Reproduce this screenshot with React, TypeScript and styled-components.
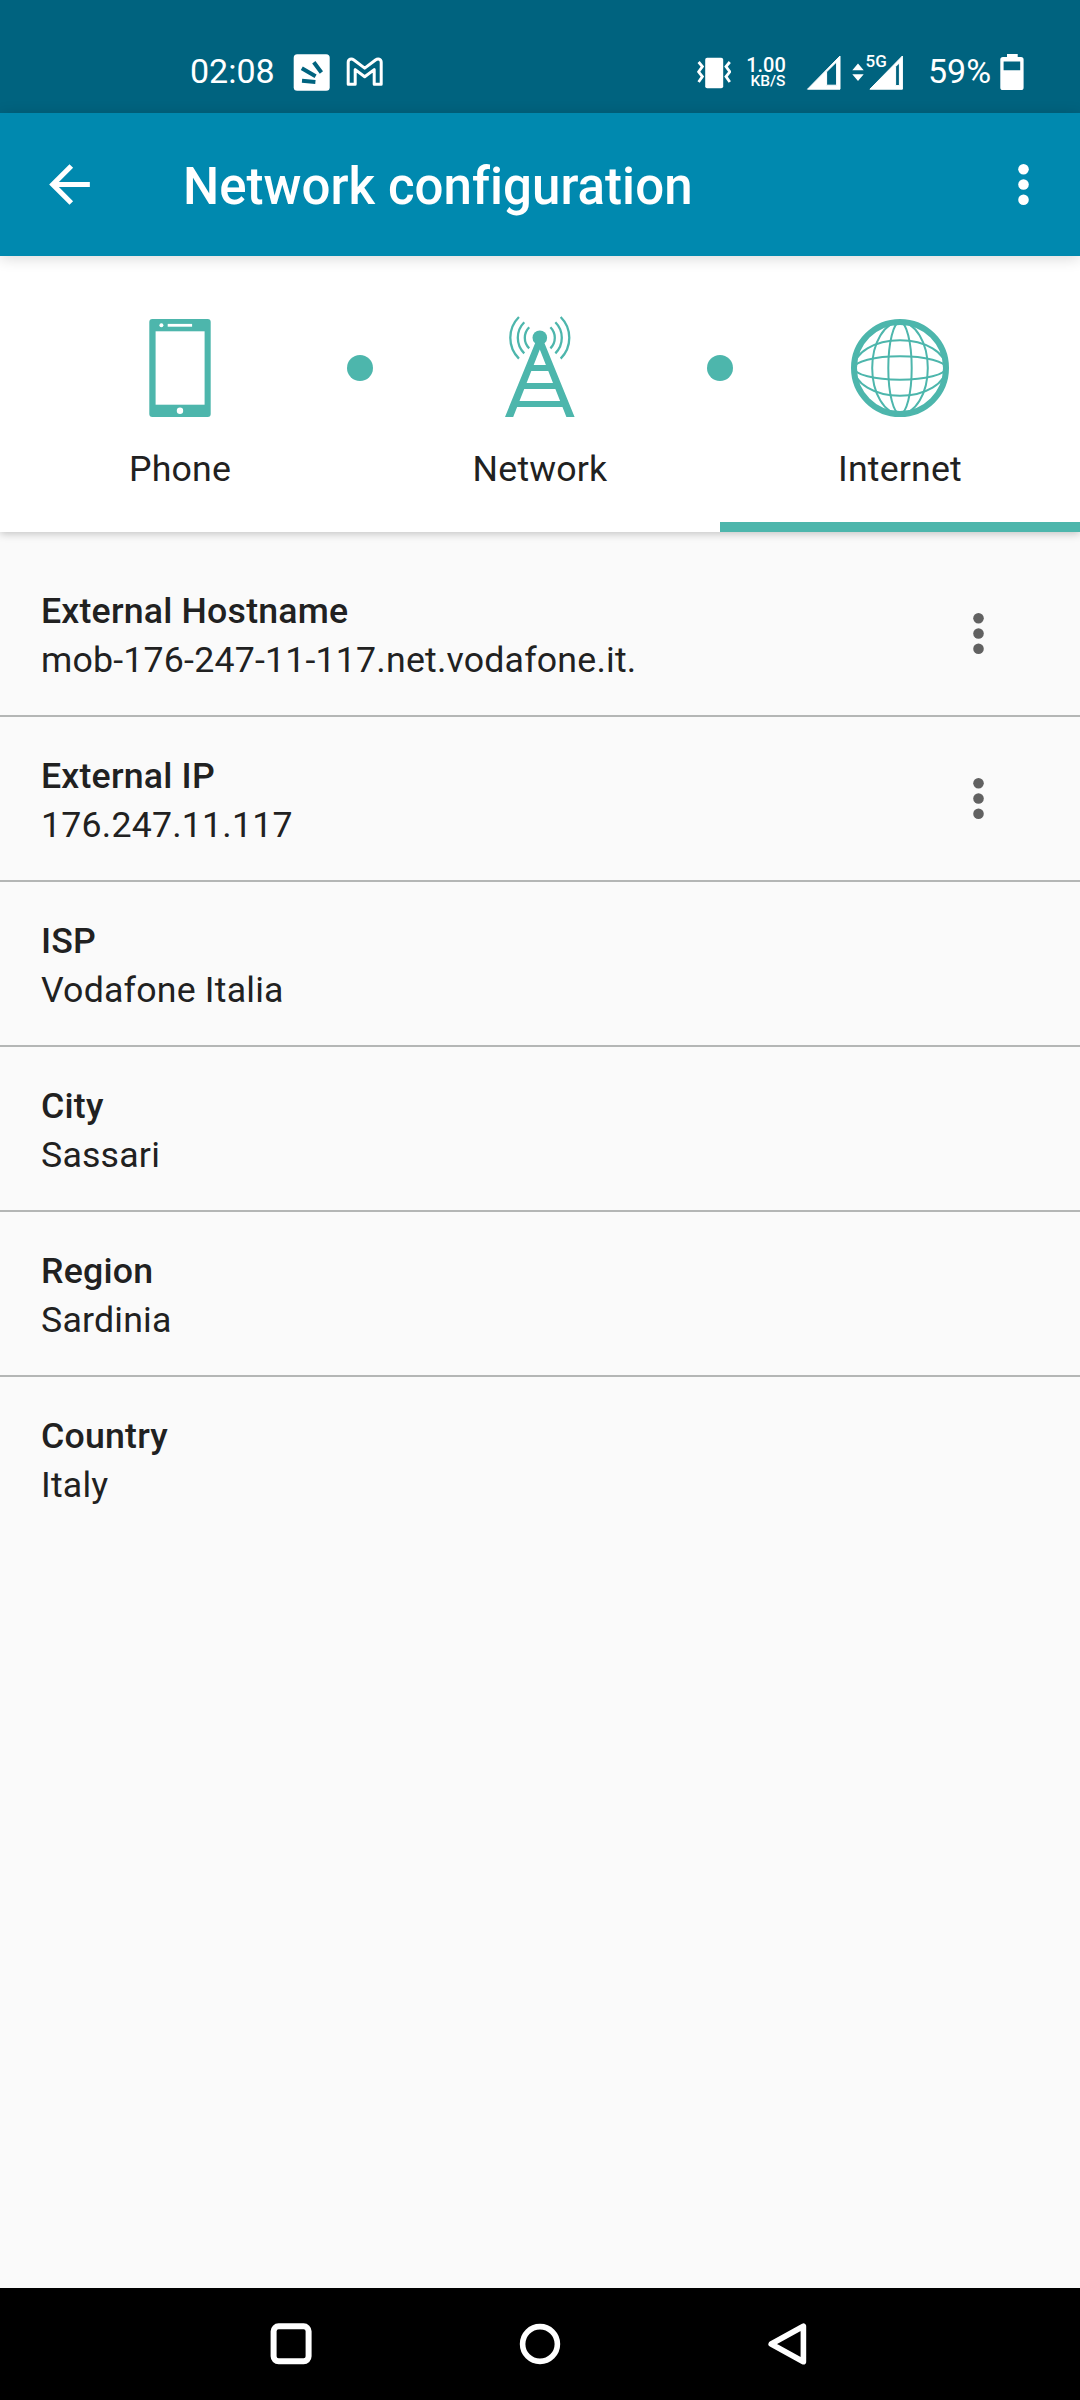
import React from "react";
import styled, { createGlobalStyle } from "styled-components";

const teal = "#4db6ac";

const GlobalStyle = createGlobalStyle`
  * { box-sizing: border-box; }
  body { margin: 0; background: #fafafa; font-family: Roboto, "Noto Sans", sans-serif; }
`;

const Screen = styled.div`
  width: 1080px;
  height: 2400px;
  display: flex;
  flex-direction: column;
  background: #fafafa;
  color: #212121;
  overflow: hidden;
`;

const StatusBar = styled.header`
  height: 113px;
  flex: none;
  padding: 31px 56px 0 190px;
  display: flex;
  justify-content: space-between;
  background: #00637f;
  color: #fff;
`;

const StatusGroup = styled.div`
  height: 82px;
  display: flex;
  align-items: center;
`;

const StatusText = styled.span<{ $width: number }>`
  width: ${(p) => p.$width}px;
  font-size: 34px;
  line-height: 40px;
  padding-bottom: 2px;
  white-space: nowrap;
`;

const Glyph = styled.svg<{ $ml?: number }>`
  display: block;
  flex: none;
  margin-left: ${(p) => p.$ml ?? 0}px;
`;

const NetSpeed = styled.div`
  width: 42px;
  margin-left: 14px;
  margin-right: 1px;
  display: flex;
  flex-direction: column;
  align-items: center;
  font-weight: 500;
  white-space: nowrap;
`;

const SpeedValue = styled.span`
  font-size: 20px;
  line-height: 18px;
`;

const SpeedUnit = styled.span`
  font-size: 15.5px;
  line-height: 14px;
  padding-left: 4px;
`;

const MobileSignal = styled.div`
  position: relative;
  margin-left: 11px;
`;

const SignalTag = styled.span`
  position: absolute;
  left: 13.5px;
  top: -2px;
  font-size: 17px;
  line-height: 17px;
  font-weight: 500;
`;

const AppBar = styled.div`
  height: 143px;
  flex: none;
  padding: 0 26px 0 39px;
  display: flex;
  align-items: center;
  background: #0089af;
  color: #fff;
  box-shadow: 0 2px 14px rgba(0, 0, 0, 0.16);
  z-index: 2;
`;

const Heading = styled.h1`
  flex: 1;
  margin: 0 0 0 83px;
  font-size: 51px;
  line-height: 60px;
  font-weight: 500;
  letter-spacing: 0.04px;
  font-variant-ligatures: common-ligatures;
  padding-top: 4px;
  white-space: nowrap;
`;

const IconButton = styled.button`
  border: 0;
  padding: 0;
  background: none;
  color: inherit;
  display: flex;
`;

const Tabs = styled.nav`
  position: relative;
  height: 276px;
  flex: none;
  display: grid;
  grid-template-columns: repeat(3, 1fr);
  background: #fff;
  box-shadow: 0 2px 8px rgba(0, 0, 0, 0.22);
  z-index: 1;
`;

const Tab = styled.div<{ $active?: boolean }>`
  display: flex;
  flex-direction: column;
  align-items: center;
  padding-top: 50px;
  color: ${teal};
  border-bottom: 10px solid ${(p) => (p.$active ? teal : "transparent")};
`;

const TabLabel = styled.span`
  margin-top: 17px;
  font-size: 35.7px;
  line-height: 44px;
  letter-spacing: 0.2px;
  color: #212121;
`;

const Separator = styled.i<{ $x: number }>`
  position: absolute;
  left: ${(p) => p.$x - 13}px;
  top: 99px;
  width: 26px;
  height: 26px;
  border-radius: 50%;
  background: ${teal};
`;

const List = styled.main`
  flex: 1;
  padding-top: 20px;
`;

const Row = styled.section<{ $last: boolean }>`
  height: 165px;
  padding: 5px 71px 0 41px;
  display: flex;
  align-items: center;
  justify-content: space-between;
  border-bottom: 2px solid ${(p) => (p.$last ? "transparent" : "#b4b6b5")};
`;

const RowText = styled.div`
  display: flex;
  flex-direction: column;
  font-size: 35.7px;
  line-height: 49px;
  letter-spacing: 0.2px;
`;

const RowTitle = styled.span`
  font-weight: 500;
`;

const RowMenu = styled(IconButton)`
  color: #616161;
  margin-bottom: 5px;
`;

const NavBar = styled.footer`
  height: 112px;
  flex: none;
  padding: 0 249px;
  display: flex;
  align-items: center;
  justify-content: space-between;
  background: #000;
`;

const MoreIcon = () => (
  <Glyph width="61" height="61" viewBox="0 0 24 24" fill="currentColor">
    <circle cx="12" cy="6" r="2.08" />
    <circle cx="12" cy="12" r="2.08" />
    <circle cx="12" cy="18" r="2.08" />
  </Glyph>
);

const PhoneIcon = () => (
  <Glyph width="124" height="124" viewBox="0 0 124 124">
    <rect x="31.3" y="13" width="61.4" height="98" rx="3" fill={teal} />
    <rect x="37.6" y="25.3" width="49" height="73.4" fill="#fff" />
    <rect x="49.7" y="17.9" width="24.4" height="2.8" fill="#fff" />
    <circle cx="43.4" cy="19.2" r="2" fill="#fff" />
    <circle cx="62" cy="104.8" r="3.2" fill="#fff" />
  </Glyph>
);

const TowerIcon = () => (
  <Glyph width="124" height="124" viewBox="0 0 124 124" fill={teal}>
    <circle cx="61.8" cy="31.7" r="7.3" />
    <path d="M58.4 34 L27 110.9 H35.2 L61.8 43.5 L88.4 110.9 H96.6 L65.2 34 Z" />
    <path d="M52 59 H71.6 V65 H52 Z M45 77 H78.6 V83 H45 Z M38 95 H85.6 V101 H38 Z" />
    <g fill="none" stroke={teal} strokeWidth="2.3">
      {[15, 22, 29.5].map((r) => {
        const d = r * 0.707;
        return (
          <path
            key={r}
            d={`M${61.8 - d} ${31.8 - d}A${r} ${r} 0 0 0 ${61.8 - d} ${31.8 + d}M${61.8 + d} ${31.8 - d}A${r} ${r} 0 0 1 ${61.8 + d} ${31.8 + d}`}
          />
        );
      })}
    </g>
  </Glyph>
);

const GlobeIcon = () => (
  <Glyph width="124" height="124" viewBox="0 0 124 124" fill="none" stroke={teal}>
    <circle cx="62" cy="62" r="46" strokeWidth="6" />
    <g strokeWidth="2">
      <ellipse cx="62" cy="62" rx="11.7" ry="46" />
      <ellipse cx="62" cy="62" rx="27.8" ry="46" />
      <ellipse cx="62" cy="62" rx="46" ry="11.7" />
      <ellipse cx="62" cy="62" rx="46" ry="27.8" />
    </g>
  </Glyph>
);

const entries = [
  { title: "External Hostname", value: "mob-176-247-11-117.net.vodafone.it.", menu: true },
  { title: "External IP", value: "176.247.11.117", menu: true },
  { title: "ISP", value: "Vodafone Italia" },
  { title: "City", value: "Sassari" },
  { title: "Region", value: "Sardinia" },
  { title: "Country", value: "Italy" },
];

export default function App() {
  return (
    <Screen>
      <GlobalStyle />
      <StatusBar>
        <StatusGroup>
          <StatusText $width={103}>02:08</StatusText>
          <Glyph width="37" height="37" viewBox="0 0 37 37">
            <rect x="0.7" y="0.3" width="36" height="36.4" rx="3.5" fill="#fff" />
            <g stroke="#00637f" strokeWidth="4">
              <path d="M8.8 14.3L22.6 22.3M20.8 8.2L28.4 18.5M9 26.8L22.4 28" />
            </g>
          </Glyph>
          <Glyph $ml={16} width="38" height="30" viewBox="0 0 38 30" fill="none" stroke="#fff" strokeWidth="3" strokeLinejoin="round">
            <path d="M2.2 5.3C2.2 2 5.4 1.2 7.9 3L18.7 11.1L29.5 3C32 1.2 35.2 2 35.2 5.3V27.2H28.2V12.6L18.7 19.7L9.2 12.6V27.2H2.2Z" />
          </Glyph>
        </StatusGroup>
        <StatusGroup>
          <Glyph width="34" height="34" viewBox="0 0 34 34" fill="none" stroke="#fff" strokeWidth="2.8">
            <rect x="8.2" y="2.8" width="18" height="30.5" rx="2" fill="#fff" stroke="none" />
            <path d="M1.6 7L5.4 11.5L1.6 16.8L5.4 21.5L1.6 27M32.8 7L29 11.5L32.8 16.8L29 21.5L32.8 27" />
          </Glyph>
          <NetSpeed>
            <SpeedValue>1.00</SpeedValue>
            <SpeedUnit>KB/S</SpeedUnit>
          </NetSpeed>
          <Glyph $ml={18} width="35" height="35" viewBox="0 0 35 35">
            <path d="M1.5 34.2L34 1V34.2ZM20.6 16.8V30.2H30.6V6.9Z" fill="#fff" fillRule="evenodd" stroke="#fff" strokeWidth="1" strokeLinejoin="round" />
          </Glyph>
          <MobileSignal>
            <Glyph width="52" height="35" viewBox="0 0 52 35" fill="#fff">
              <path d="M6 8.5L11.7 15.3H.3ZM.3 19.2H11.7L6 26Z" />
              <path d="M17.9 34.2L50.4 1V34.2ZM43.6 11.5V30.6H47.4V8Z" fillRule="evenodd" stroke="#fff" strokeWidth="1" strokeLinejoin="round" />
            </Glyph>
            <SignalTag>5G</SignalTag>
          </MobileSignal>
          <Glyph as="span" $ml={24} />
          <StatusText $width={72}>59%</StatusText>
          <Glyph width="24" height="36" viewBox="0 0 24 36">
            <path d="M7 0H17.7V3H21Q23.6 3 23.6 5.6V33.4Q23.6 36 21 36H3Q.3 36 .3 33.4V5.6Q.3 3 3 3H7ZM3.6 7.6V16.2H20.2V7.6Z" fill="#fff" fillRule="evenodd" />
          </Glyph>
        </StatusGroup>
      </StatusBar>

      <AppBar>
        <IconButton aria-label="Back">
          <Glyph width="61" height="61" viewBox="0 0 24 24" fill="currentColor">
            <path d="M20 11H7.83l5.59-5.59L12 4l-8 8 8 8 1.41-1.41L7.83 13H20v-2z" />
          </Glyph>
        </IconButton>
        <Heading>Network configuration</Heading>
        <IconButton aria-label="More options">
          <MoreIcon />
        </IconButton>
      </AppBar>

      <Tabs>
        <Tab>
          <PhoneIcon />
          <TabLabel>Phone</TabLabel>
        </Tab>
        <Tab>
          <TowerIcon />
          <TabLabel>Network</TabLabel>
        </Tab>
        <Tab $active>
          <GlobeIcon />
          <TabLabel>Internet</TabLabel>
        </Tab>
        <Separator $x={360} />
        <Separator $x={720} />
      </Tabs>

      <List>
        {entries.map((entry, i) => (
          <Row key={entry.title} $last={i === entries.length - 1}>
            <RowText>
              <RowTitle>{entry.title}</RowTitle>
              <span>{entry.value}</span>
            </RowText>
            {entry.menu && (
              <RowMenu aria-label={`${entry.title} options`}>
                <MoreIcon />
              </RowMenu>
            )}
          </Row>
        ))}
      </List>

      <NavBar>
        <Glyph width="84" height="84" viewBox="0 0 84 84" fill="none" stroke="#fff" strokeWidth="6">
          <rect x="24.6" y="24.3" width="35" height="35" rx="5" />
        </Glyph>
        <Glyph width="84" height="84" viewBox="0 0 84 84" fill="none" stroke="#fff" strokeWidth="5.6">
          <circle cx="42" cy="42" r="17.4" />
        </Glyph>
        <Glyph width="84" height="84" viewBox="0 0 84 84" fill="none" stroke="#fff" strokeWidth="5.6" strokeLinejoin="round">
          <path d="M24.2 42L56.4 24.2V59.8Z" />
        </Glyph>
      </NavBar>
    </Screen>
  );
}
